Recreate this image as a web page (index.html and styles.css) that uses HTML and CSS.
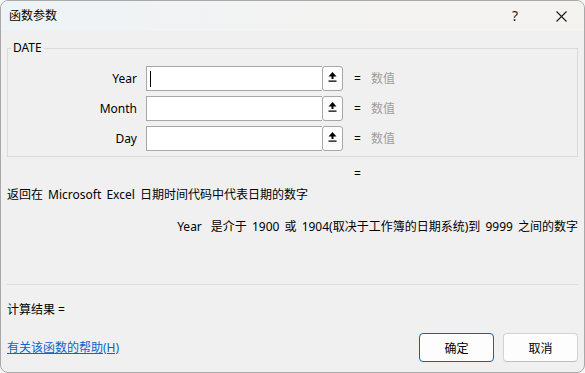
FILE: index.html
```html
<!DOCTYPE html>
<html lang="zh-CN">

<head>
    <meta charset="UTF-8">
    <meta name="viewport" content="width=device-width, initial-scale=1.0">
    <title>函数参数</title>
    <link rel="stylesheet" href="styles.css">
</head>

<body>
    <div class="window">
        <div class="titlebar">
            <span class="title">函数参数</span>
            <span class="title-btn help">?</span>
            <span class="title-btn close">
                <svg width="11" height="11" viewBox="0 0 11 11">
                    <path d="M0.5 0.5 L10.5 10.5 M10.5 0.5 L0.5 10.5" stroke="#1a1a1a" stroke-width="1.1" fill="none" />
                </svg>
            </span>
        </div>

        <div class="content">
            <fieldset class="args">
                <legend>DATE</legend>

                <div class="arg-row">
                    <label class="arg-label">Year</label>
                    <div class="field">
                        <div class="field-box"><span class="caret"></span></div>
                        <div class="ref-btn">
                            <svg width="9" height="10" viewBox="0 0 9 10">
                                <path d="M4.5 0 L8.5 4.5 L0.5 4.5 Z M3.5 4 H5.5 V7 H3.5 Z M0.5 8.5 H8.5 V9.7 H0.5 Z" fill="#000" />
                            </svg>
                        </div>
                    </div>
                    <span class="eq">=</span>
                    <span class="arg-value">数值</span>
                </div>

                <div class="arg-row">
                    <label class="arg-label">Month</label>
                    <div class="field">
                        <div class="field-box"></div>
                        <div class="ref-btn">
                            <svg width="9" height="10" viewBox="0 0 9 10">
                                <path d="M4.5 0 L8.5 4.5 L0.5 4.5 Z M3.5 4 H5.5 V7 H3.5 Z M0.5 8.5 H8.5 V9.7 H0.5 Z" fill="#000" />
                            </svg>
                        </div>
                    </div>
                    <span class="eq">=</span>
                    <span class="arg-value">数值</span>
                </div>

                <div class="arg-row">
                    <label class="arg-label">Day</label>
                    <div class="field">
                        <div class="field-box"></div>
                        <div class="ref-btn">
                            <svg width="9" height="10" viewBox="0 0 9 10">
                                <path d="M4.5 0 L8.5 4.5 L0.5 4.5 Z M3.5 4 H5.5 V7 H3.5 Z M0.5 8.5 H8.5 V9.7 H0.5 Z" fill="#000" />
                            </svg>
                        </div>
                    </div>
                    <span class="eq">=</span>
                    <span class="arg-value">数值</span>
                </div>
            </fieldset>

            <div class="result-eq">=</div>

            <div class="desc">返回在 Microsoft Excel 日期时间代码中代表日期的数字</div>

            <div class="param-desc"><span class="param-name">Year</span>是介于 1900 或 1904(取决于工作簿的日期系统)到 9999 之间的数字</div>

            <hr class="sep">

            <div class="calc">计算结果 =</div>

            <div class="footer">
                <a href="#" class="help-link">有关该函数的帮助(H)</a>
                <div class="buttons">
                    <button class="btn btn-primary">确定</button>
                    <button class="btn">取消</button>
                </div>
            </div>
        </div>
    </div>
</body>

</html>
```

FILE: styles.css
```css
html,
body {
    margin: 0;
    padding: 0;
    background-color: #f6f6f6;
}

body {
    font-family: "Segoe UI", "Noto Sans", "Noto Sans CJK SC", sans-serif;
    font-size: 12px;
    line-height: 16px;
    color: #000;
}

.window {
    box-sizing: border-box;
    width: 585px;
    height: 373px;
    background-color: #f0f0f0;
    border: 1px solid #a9a9a9;
    border-radius: 8px;
    overflow: hidden;
}

.titlebar {
    display: flex;
    align-items: center;
    height: 30px;
    background: linear-gradient(90deg, #edf3f6 0%, #f3f3f3 45%, #f4f3f0 100%);
}

.title {
    flex: 1;
    padding-left: 8px;
}

.title-btn {
    width: 46px;
    height: 30px;
    display: flex;
    align-items: center;
    justify-content: center;
}

.help {
    font-size: 14px;
    color: #1a1a1a;
}

.content {
    padding: 0 6px;
}

/* argument box */
.args {
    margin: 9px 0 0;
    padding: 10px 0 5px;
    border: 1px solid #dadada;
}

.args legend {
    margin-left: 3px;
    padding: 0 2px;
    line-height: 16px;
}

.arg-row {
    display: flex;
    align-items: center;
    height: 25px;
    margin-bottom: 5px;
}

.arg-row:last-child {
    margin-bottom: 0;
}

.arg-label {
    width: 129px;
    margin-right: 9px;
    text-align: right;
}

.field {
    display: flex;
    width: 197px;
    height: 25px;
}

.field-box {
    flex: 1;
    display: flex;
    align-items: center;
    padding-left: 3px;
    background-color: #fff;
    border: 1px solid #a7a7a7;
    border-right: none;
}

.caret {
    width: 1px;
    height: 16px;
    background-color: #000;
}

.ref-btn {
    box-sizing: border-box;
    width: 21px;
    height: 25px;
    display: flex;
    justify-content: center;
    padding-top: 5px;
    background-color: #fcfcfc;
    border: 1px solid #a7a7a7;
    border-radius: 3px;
}

.eq {
    margin-left: 11px;
}

.arg-value {
    margin-left: 10px;
    color: #9d9d9d;
}

/* descriptions */
.result-eq {
    margin-top: 9px;
    padding-left: 347px;
}

.desc {
    margin-top: 5px;
    word-spacing: 2px;
}

.param-desc {
    margin-top: 16px;
    text-align: right;
    word-spacing: 2px;
}

.param-name {
    margin-right: 9px;
}

.sep {
    margin: 49px 0 0;
    border: none;
    border-top: 1px solid #dcdcdc;
}

.calc {
    margin-top: 17px;
}

.footer {
    display: flex;
    align-items: center;
    justify-content: space-between;
    margin-top: 15px;
}

.help-link {
    color: #0a66c8;
    text-decoration: underline;
}

.buttons {
    display: flex;
    gap: 9px;
}

.btn {
    width: 75px;
    height: 29px;
    font-family: inherit;
    font-size: 12px;
    color: #000;
    background-color: #fdfdfd;
    border: 1px solid #d3d3d3;
    border-bottom-color: #bdbdbd;
    border-radius: 4px;
}

.btn-primary {
    border: 1px solid #0067c0;
}
```
